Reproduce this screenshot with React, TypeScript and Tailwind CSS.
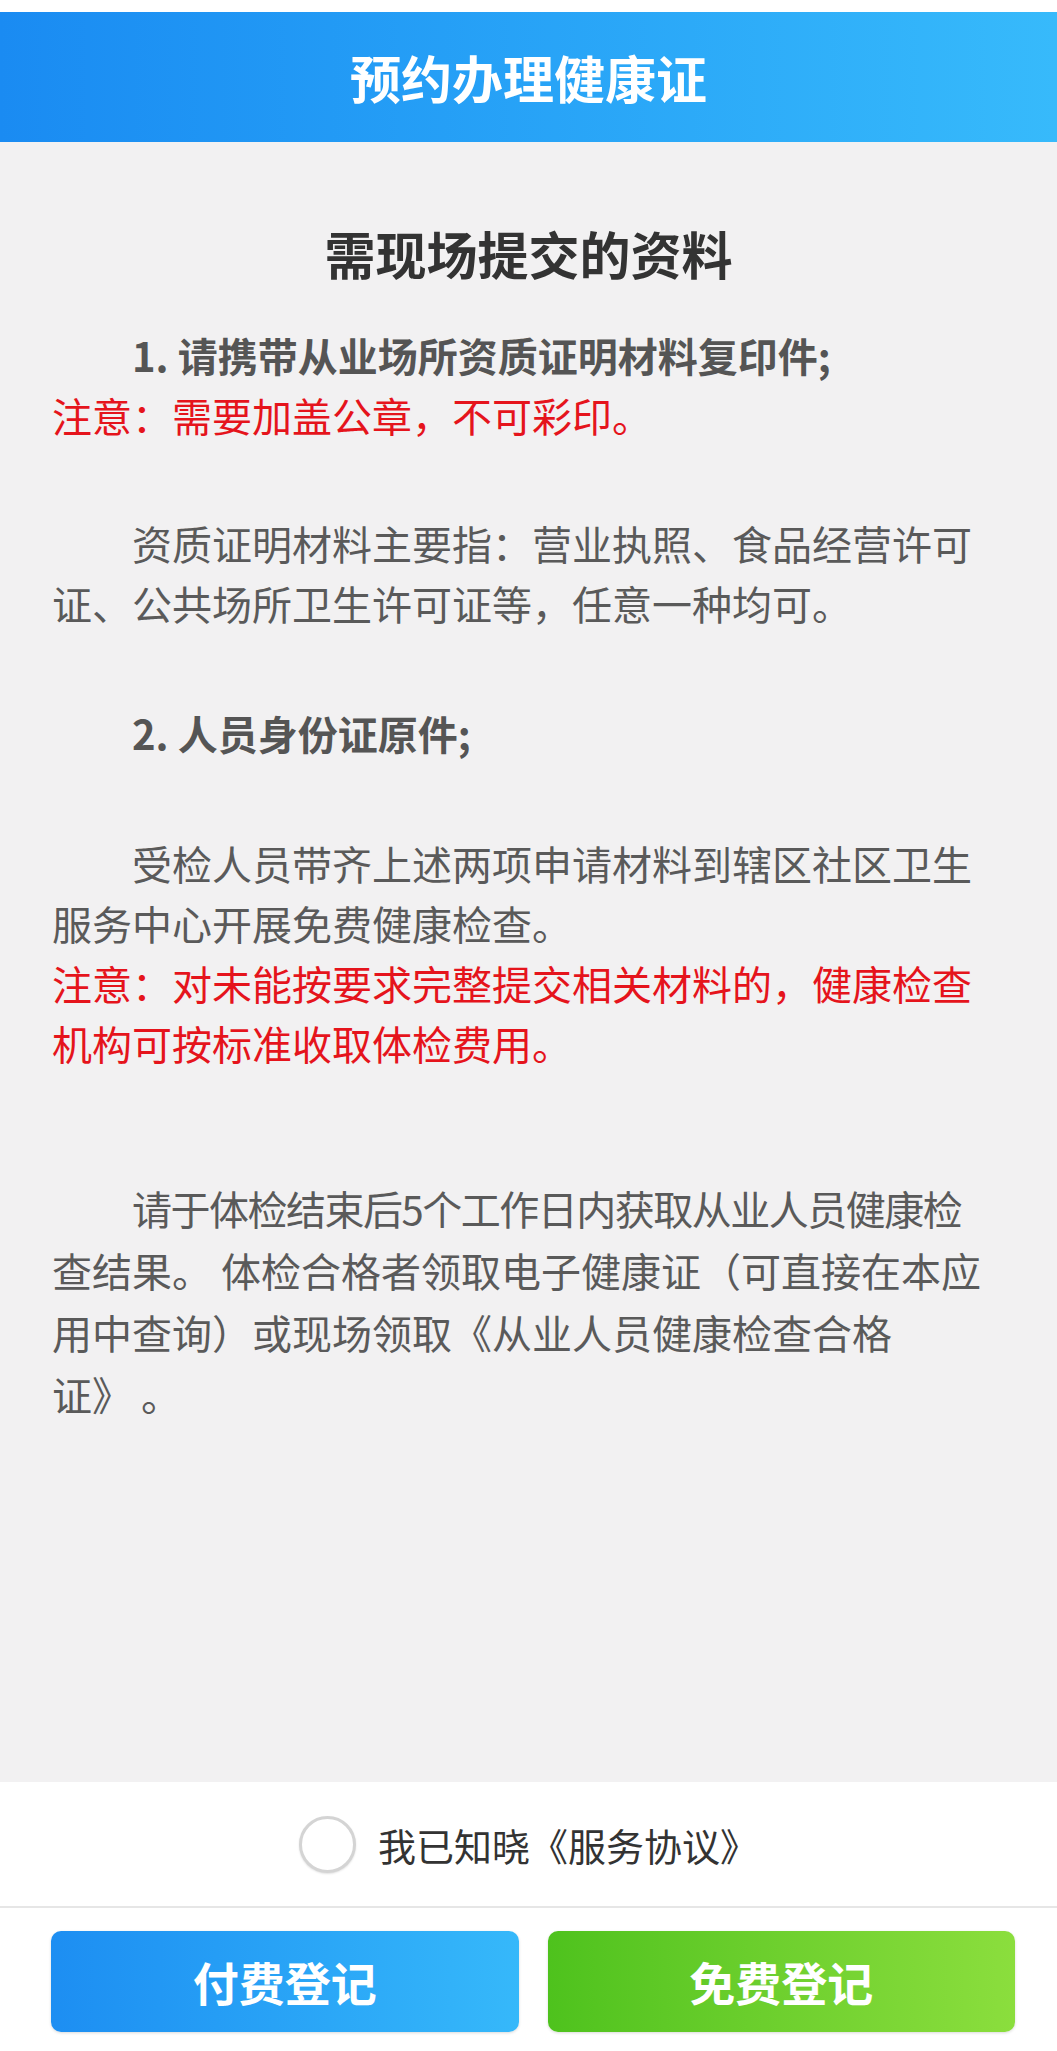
import React, { useState } from 'react';

const App: React.FC = () => {
  const [agreed, setAgreed] = useState(false);

  return (
    <div className="min-h-[2051px] flex flex-col bg-[#f2f1f2] font-['Noto_Sans_CJK_SC',sans-serif]">
      <div className="h-[12px] bg-white" />
      <header className="h-[130px] flex items-center justify-center bg-gradient-to-r from-[#1a8bf2] to-[#37bafb] text-white text-[51px] font-bold">
        预约办理健康证
      </header>

      <main className="flex-1 px-[52px] pt-[76px] text-[40px] leading-[60px] text-[#5a5a5a] whitespace-nowrap">
        <h1 className="text-center text-[51px] leading-[70px] font-bold text-[#333333]">需现场提交的资料</h1>

        <p className="mt-[37px] indent-[80px] font-bold text-[#555555]">1. 请携带从业场所资质证明材料复印件;</p>
        <p className="text-[#e5141c]">注意：需要加盖公章，不可彩印。</p>

        <p className="mt-[68px] indent-[80px]">
          资质证明材料主要指：营业执照、食品经营许可
          <br />
          证、公共场所卫生许可证等，任意一种均可。
        </p>

        <p className="mt-[70px] indent-[80px] font-bold text-[#555555]">2. 人员身份证原件;</p>

        <p className="mt-[70px] indent-[80px]">
          受检人员带齐上述两项申请材料到辖区社区卫生
          <br />
          服务中心开展免费健康检查。
        </p>
        <p className="text-[#e5141c]">
          注意：对未能按要求完整提交相关材料的，健康检查
          <br />
          机构可按标准收取体检费用。
        </p>

        <div className="mt-[104px] leading-[62px]">
          <p className="pl-[80px] tracking-[-1.5px]">请于体检结束后5个工作日内获取从业人员健康检</p>
          <p>查结果。 体检合格者领取电子健康证（可直接在本应</p>
          <p>用中查询）或现场领取《从业人员健康检查合格</p>
          <p>证》 。</p>
        </div>
      </main>

      <footer className="bg-white">
        <div className="h-[126px] flex items-center justify-center gap-[22px] border-b-2 border-[#e6e6e6]">
          <button
            onClick={() => setAgreed(!agreed)}
            className={`w-[57px] h-[57px] rounded-full border-[3px] shadow-[0_1px_2px_rgba(0,0,0,0.12)] ${
              agreed ? 'border-[#1a8bf2] bg-[#1a8bf2]' : 'border-[#d4d4d4] bg-white'
            }`}
          />
          <span className="text-[38px] text-[#333333]">我已知晓《服务协议》</span>
        </div>
        <div className="flex gap-[29px] pl-[51px] pr-[42px] pt-[23px] pb-[19px]">
          <button className="flex-1 h-[101px] rounded-[10px] bg-gradient-to-r from-[#1d8ef2] to-[#36b8fa] text-white text-[46px] font-bold shadow-[0_1px_3px_rgba(0,0,0,0.15)]">
            付费登记
          </button>
          <button className="flex-1 h-[101px] rounded-[10px] bg-gradient-to-r from-[#4ec21d] to-[#8bde3d] text-white text-[46px] font-bold shadow-[0_1px_3px_rgba(0,0,0,0.15)]">
            免费登记
          </button>
        </div>
      </footer>
    </div>
  );
};

export default App;
